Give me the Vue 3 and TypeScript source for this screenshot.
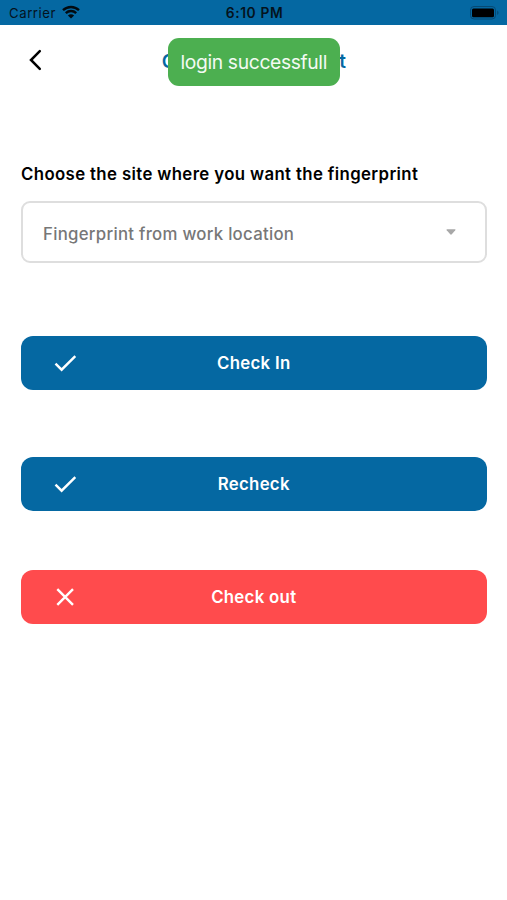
<script setup lang="ts">
import { ref } from 'vue'

interface Action {
  label: string
  icon: 'check' | 'close'
  kind: 'in' | 'again' | 'out'
}

const title = 'Choose fingerprint'
const message = ref('login successfull')
const site = ref('Fingerprint from work location')
const actions: Action[] = [
  { label: 'Check In', icon: 'check', kind: 'in' },
  { label: 'Recheck', icon: 'check', kind: 'again' },
  { label: 'Check out', icon: 'close', kind: 'out' },
]
</script>

<template>
  <div class="screen">
    <div class="status">
      <div class="carrier">
        <span class="carrier-name">Carrier</span>
        <svg class="wifi" width="18" height="14" viewBox="0 0 18 14">
          <path d="M1 5.2C5.6 .9 12.4 .9 17 5.2" />
          <path d="M3.8 8.1C6.8 5.3 11.2 5.3 14.2 8.1" />
          <path class="dot" d="M9 13.4L5.9 10.4C7.7 8.8 10.3 8.8 12.1 10.4Z" />
        </svg>
      </div>
      <span class="time">6:10 PM</span>
      <svg class="battery" width="30" height="14" viewBox="0 0 30 14">
        <rect class="shell" x=".5" y=".5" width="25" height="12.5" rx="3.5" />
        <rect x="2" y="2.4" width="22" height="8.8" rx="1.5" />
        <path class="cap" d="M27.2 4.6C29 5.4 29 8.2 27.2 9Z" />
      </svg>
    </div>

    <header class="bar">
      <button class="back" aria-label="Back">
        <svg width="14" height="22" viewBox="0 0 14 22">
          <path d="M11.8 2.2L3 11L11.8 19.8" />
        </svg>
      </button>
      <h1 class="title">{{ title }}</h1>
      <div class="toast" role="status"><span>{{ message }}</span></div>
    </header>

    <main class="content">
      <p class="prompt">Choose the site where you want the fingerprint</p>
      <div class="select" role="combobox" aria-expanded="false">
        <span class="value">{{ site }}</span>
        <svg width="10" height="6" viewBox="0 0 10 6">
          <path d="M.8 .2H9.2Q9.8 .6 9.3 1.3L5.8 5.3Q5 6 4.2 5.3L.7 1.3Q.2 .6 .8 .2Z" />
        </svg>
      </div>

      <button v-for="a in actions" :key="a.kind" class="action" :class="a.kind">
        <svg v-if="a.icon === 'check'" class="icon" width="24" height="20" viewBox="0 0 24 20">
          <path d="M2.5 10.7L8.6 16.7L22.3 3.2" />
        </svg>
        <svg v-else class="icon" width="24" height="20" viewBox="0 0 24 20">
          <path d="M4.3 2.2L20 17.8M20 2.2L4.3 17.8" />
        </svg>
        <span>{{ a.label }}</span>
      </button>
    </main>
  </div>
</template>

<style>
body {
  margin: 0;
  background: #fff;
}
</style>

<style scoped>
.screen {
  box-sizing: border-box;
  width: 100%;
  min-height: 900px;
  background: #fff;
  font-family: Inter, 'Liberation Sans', sans-serif;
  color: #000;
}

.status {
  display: grid;
  grid-template-columns: 1fr auto 1fr;
  align-items: center;
  height: 25px;
  padding: 2px 7px 1px 9px;
  box-sizing: border-box;
  background: #0568a2;
  font-size: 13.2px;
  line-height: 22px;
  color: #04131d;
}

.carrier {
  display: flex;
  align-items: center;
  gap: 6px;
}

.carrier-name {
  letter-spacing: 0.55px;
}

.wifi {
  margin-top: -2px;
  margin-left: -0.5px;
  fill: none;
  stroke: #020a10;
  stroke-width: 2.4;
}

.wifi .dot {
  fill: #020a10;
  stroke: none;
}

.time {
  font-size: 13.8px;
  font-weight: 600;
  letter-spacing: 0.6px;
}

.battery {
  justify-self: end;
  margin-top: 0;
}

.battery .shell {
  fill: none;
  stroke: #064a74;
}

.battery .cap {
  fill: #064a74;
}

.bar {
  position: relative;
  display: flex;
  align-items: center;
  justify-content: center;
  height: 73px;
}

.back {
  position: absolute;
  left: 28px;
  top: 24px;
  padding: 0;
  border: 0;
  background: none;
}

.back svg {
  display: block;
  fill: none;
  stroke: #000;
  stroke-width: 2.5;
  stroke-linecap: round;
}

.title {
  margin: 0 0 0 1.5px;
  font-size: 19px;
  font-weight: 600;
  line-height: 24px;
  letter-spacing: 0.65px;
  color: #0568a2;
}

.toast {
  position: absolute;
  left: 168px;
  top: 12.5px;
  display: flex;
  align-items: center;
  justify-content: center;
  width: 171.5px;
  height: 48px;
  border-radius: 11px;
  background: #4caf50;
  font-size: 19.3px;
  letter-spacing: -0.36px;
  color: #f3faf3;
  white-space: nowrap;
}

.content {
  display: flex;
  flex-direction: column;
  padding: 64px 20.5px 0 21px;
}

.prompt {
  margin: 0;
  font-size: 16.8px;
  font-weight: 600;
  line-height: 24px;
  letter-spacing: 0.37px;
  white-space: nowrap;
}

.select {
  display: flex;
  align-items: center;
  justify-content: space-between;
  box-sizing: border-box;
  height: 62px;
  margin-top: 15px;
  padding: 4px 29px 0 20px;
  border: 2px solid #dedede;
  border-radius: 9px;
  font-size: 16.8px;
  font-weight: 550;
  letter-spacing: 0.27px;
  color: #777;
}

.select svg {
  margin-top: -4px;
  fill: #a8a8a8;
}

.action {
  display: grid;
  grid-template-columns: 24px 1fr 24px;
  align-items: center;
  height: 54px;
  padding: 0 32px;
  border: 0;
  border-radius: 12px;
  background: #0568a2;
  font-family: inherit;
  font-size: 16.8px;
  font-weight: 600;
  letter-spacing: 0.3px;
  color: #fff;
}

.icon {
  fill: none;
  stroke: #fff;
  stroke-width: 2.4;
}

.in {
  margin-top: 73px;
}

.again {
  margin-top: 67.4px;
}

.out {
  margin-top: 58.8px;
  background: #ff4b4d;
}
</style>
